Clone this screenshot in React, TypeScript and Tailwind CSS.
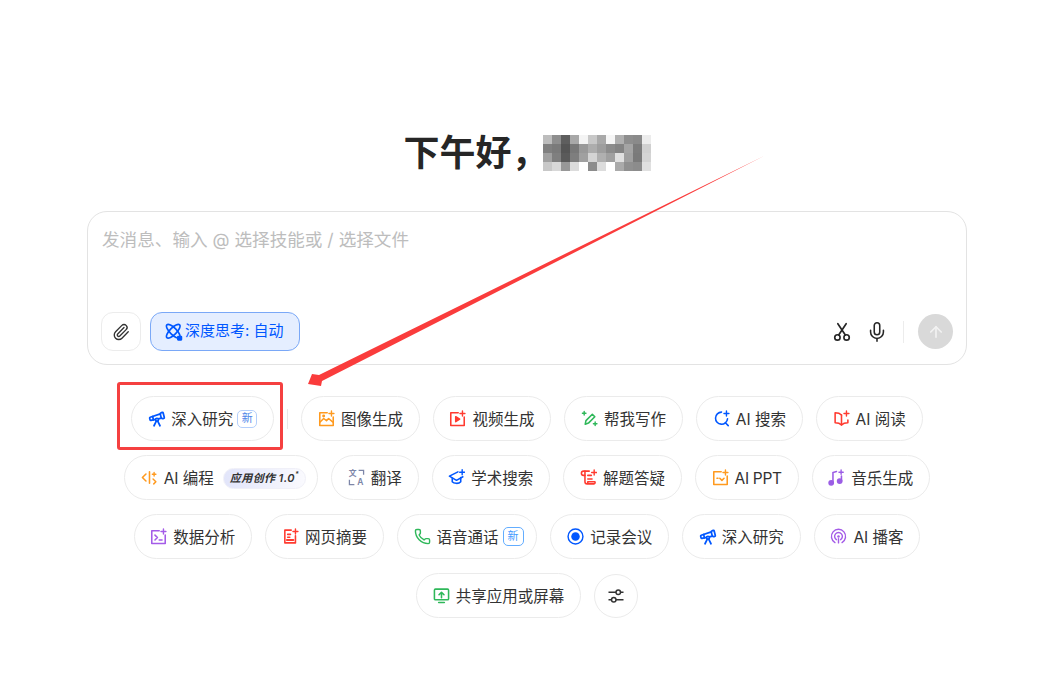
import type { ReactNode } from 'react'
import { ArrowUp, Mic, Paperclip, Phone, Telescope } from 'lucide-react'

const BLOCKS = [
  'bg-[#bdbdbd]', 'bg-[#8e8e8e]', 'bg-[#5e5e5e]', 'bg-[#a8a8a8]', 'bg-[#f4f4f4]', 'bg-[#c8c8c8]', 'bg-[#a9a9a9]', 'bg-[#f6f6f6]', 'bg-[#b0b0b0]', 'bg-[#8e8e8e]', 'bg-[#8a8a8a]', 'bg-[#ececec]',
  'bg-[#808080]', 'bg-[#7a7a7a]', 'bg-[#555555]', 'bg-[#787878]', 'bg-[#999999]', 'bg-[#adadad]', 'bg-[#9e9e9e]', 'bg-[#8c8c8c]', 'bg-[#848484]', 'bg-[#a4a4a4]', 'bg-[#7c7c7c]', 'bg-[#d0d0d0]',
  'bg-[#a0a0a0]', 'bg-[#7f7f7f]', 'bg-[#5a5a5a]', 'bg-[#7e7e7e]', 'bg-[#a0a0a0]', 'bg-[#d4d4d4]', 'bg-[#b0b0b0]', 'bg-[#a0a0a0]', 'bg-[#e0e0e0]', 'bg-[#a0a0a0]', 'bg-[#7a7a7a]', 'bg-[#d4d4d4]',
  'bg-[#c8c8c8]', 'bg-[#d8d8d8]', 'bg-[#989898]', 'bg-[#dcdcdc]', 'bg-[#ffffff]', 'bg-[#8c8c8c]', 'bg-[#dcdcdc]', 'bg-[#ffffff]', 'bg-[#aaaaaa]', 'bg-[#909090]', 'bg-[#8c8c8c]', 'bg-[#e0e0e0]',
]

function Ico({ className, children }: { className: string; children: ReactNode }) {
  return (
    <svg viewBox="0 0 24 24" fill="none" stroke="currentColor" strokeWidth="2.2" strokeLinecap="round" strokeLinejoin="round"
      className={`h-[17px] w-[17px] shrink-0 ${className}`}>
      {children}
    </svg>
  )
}

// the little plus in the corner of most icons
const Spark = ({ x = 19, y = 5 }: { x?: number; y?: number }) => (
  <path d={`M${x} ${y - 3.5}v7M${x - 3.5} ${y}h7`} strokeWidth="2" />
)

const icons = {
  telescope: <Telescope className="h-[18px] w-[18px] shrink-0 text-[#0057ff]" strokeWidth={2.3} />,
  image: (
    <Ico className="text-[#ff9a1f]">
      <path d="M13 4H2.500v18h19V10" />
      <path d="M3 17l5-5 4 3 3-3 6 5" />
      <circle cx="8" cy="8.500" r="1" />
      <Spark />
    </Ico>
  ),
  video: (
    <Ico className="text-[#ff3b30]">
      <path d="M13 4H2.500v18h19V10" />
      <path d="M9.500 9.500v7l5.500-3.500z" fill="currentColor" />
      <Spark />
    </Ico>
  ),
  write: (
    <Ico className="text-[#2fb85a]">
      <path d="M6 20l1-5L16 6l3.500 3.500L10.500 18.500z" />
      <path d="M4.500 2v5M2 4.500h5M20 17v5M17.500 19.500h5" strokeWidth="2" />
    </Ico>
  ),
  search: (
    <Ico className="text-[#0057ff]">
      <path d="M12 3a8.500 8.500 0 1 0 8.500 9.500" />
      <path d="M17.500 18l4 4" />
      <Spark />
    </Ico>
  ),
  read: (
    <Ico className="text-[#ff3b30]">
      <path d="M12 7c-2-2-5-3-9-3v14c4 0 7 1 9 3 2-2 5-3 9-3v-4" />
      <path d="M12 7v14" />
      <Spark />
    </Ico>
  ),
  code: (
    <Ico className="text-[#ff9a1f]">
      <path d="M7 7l-5 5 5 5M12 4v16" />
      <path d="M18.500 5v5M16 7.500h5M17 14l4 4-3 3" strokeWidth="2" />
    </Ico>
  ),
  translate: (
    <svg viewBox="0 0 24 24" className="h-[17px] w-[17px] shrink-0 text-[#7d86a8]" fill="none" stroke="currentColor" strokeWidth="1.800">
      <text x="1" y="10.500" fontSize="11" fill="currentColor" stroke="none" fontWeight="600">文</text>
      <text x="13" y="22.500" fontSize="12" fill="currentColor" stroke="none" fontWeight="600">A</text>
      <path d="M15 2h7v6M2 15v7h7" />
    </svg>
  ),
  cap: (
    <Ico className="text-[#0057ff]">
      <path d="M14 4L2 10l10 6 9-5" />
      <path d="M6 13v5c2 2.500 9 3.500 12 0v-6" />
      <Spark x={20} y={4.500} />
    </Ico>
  ),
  scroll: (
    <Ico className="text-[#ff3b30]">
      <path d="M13 3H5a3 3 0 0 0-3 3c0 2 1 3 3 3h2v9a3 3 0 0 0 3 3h10a2 2 0 0 0 1-3H11v2" />
      <path d="M7 9V3M11 9h5M11 14h6" />
      <Spark x={20} y={5} />
    </Ico>
  ),
  ppt: (
    <Ico className="text-[#ff9a1f]">
      <path d="M13 4H2.500v18h19V10" />
      <path d="M7 13h1.500M11 13l3 3 3-3" />
      <Spark />
    </Ico>
  ),
  music: (
    <svg viewBox="0 0 24 24" className="h-[17px] w-[17px] shrink-0 text-[#9b5de5]" fill="none" stroke="currentColor" strokeWidth="2.200" strokeLinecap="round">
      <path d="M7 19V5l5-1.500" />
      <circle cx="4.500" cy="19.500" r="3" fill="currentColor" />
      <path d="M19 17V10" />
      <circle cx="16.500" cy="17" r="3" fill="currentColor" />
      <path d="M18.500 1.500v6M15.500 4.500h6" strokeWidth="2" />
    </svg>
  ),
  data: (
    <Ico className="text-[#a45be8]">
      <path d="M13 4H2.500v18h19V10" />
      <path d="M7 10l3.500 3.500L7 17M13 17h4" />
      <Spark />
    </Ico>
  ),
  page: (
    <Ico className="text-[#ff3b30]">
      <path d="M13 3H4v18h15V11" />
      <path d="M8 9h4M8 13h3" />
      <path d="M7 17h9" strokeWidth="3" />
      <Spark x={19} y={5} />
    </Ico>
  ),
  phone: <Phone className="h-[17px] w-[17px] shrink-0 text-[#2fb85a]" strokeWidth={2} />,
  record: (
    <svg viewBox="0 0 24 24" className="h-[17px] w-[17px] shrink-0 text-[#0057ff]" fill="none" stroke="currentColor" strokeWidth="2">
      <circle cx="12" cy="12" r="10.500" />
      <circle cx="12" cy="12" r="6" fill="currentColor" stroke="none" />
    </svg>
  ),
  podcast: (
    <svg viewBox="0 0 24 24" className="h-[17px] w-[17px] shrink-0 text-[#a45be8]" fill="none" stroke="currentColor" strokeWidth="2" strokeLinecap="round">
      <path d="M7 20.500a10 10 0 1 1 10 0" />
      <path d="M9 16.500a5.500 5.500 0 1 1 6 0" />
      <circle cx="12" cy="12" r="1.800" fill="currentColor" stroke="none" />
      <path d="M12 15v6" />
    </svg>
  ),
  share: (
    <svg viewBox="0 0 24 24" className="h-[17px] w-[17px] shrink-0 text-[#2fb85a]" fill="none" stroke="currentColor" strokeWidth="2.200" strokeLinecap="round" strokeLinejoin="round">
      <rect x="2" y="3" width="20" height="15" rx="1.500" />
      <path d="M8 22h8" />
      <path d="M12 15V8M8.500 11l3.500-3.500 3.500 3.500" />
    </svg>
  ),
}

const NewTag = ({ strong }: { strong?: boolean }) => (
  <span className={`-mt-[3px] -ml-[2px] flex items-center justify-center rounded-[5px] border text-[11px] leading-none tracking-normal ${
    strong ? '-mr-[3px] h-[19px] w-[21px] border-[#63adff] text-[#3f9bff]' : 'h-[18px] w-[20px] border-[#b4cffb] text-[#4d86e8]'
  }`}>
    新
  </span>
)

function Chip({ icon, children }: { icon: ReactNode; children: ReactNode }) {
  return (
    <div className="flex h-[45px] items-center gap-[6px] rounded-full border border-[#ebebeb] bg-white px-[15.8px] pt-[3px] text-[15.5px] text-[#333333] [&>svg]:-mt-[3px]">
      {icon}
      {children}
    </div>
  )
}

export default function App() {
  return (
    <div className="relative h-[684px] w-[1046px] overflow-hidden bg-white font-['Inter','Noto_Sans_CJK_SC',sans-serif]">
      <div className="ml-[87px] flex w-[880px] flex-col pt-[130px]">
        <div className="flex h-[46px] items-center justify-center">
          <h1 className="text-[36px] leading-[46px] font-bold text-[#262626]">下午好，</h1>
          <div className="ml-[-5px] grid grid-cols-[repeat(12,9px)] grid-rows-[repeat(4,9px)]">
            {BLOCKS.map((c, i) => <div key={i} className={c} />)}
          </div>
        </div>

        <div className="mt-[35px] flex h-[154px] flex-col justify-between rounded-[20px] border border-[#e3e3e3] bg-white px-[13px] pt-[14px] pb-[13px]">
          <div className="px-[1px] text-[17.6px] leading-[28px] text-[#bdbdbd]">发消息、输入 @ 选择技能或 / 选择文件</div>
          <div className="flex items-center">
            <button className="flex h-[39px] w-[40px] items-center justify-center rounded-[12px] border border-[#ececec]">
              <Paperclip className="h-[18px] w-[18px] text-[#333333]" strokeWidth={1.8} />
            </button>
            <button className="ml-[9px] flex h-[39px] w-[150px] items-center gap-[2px] rounded-[12px] border border-[#7aa8f7] bg-[#e5eeff] pl-[14px] text-[15px] text-[#0057ff]">
              <svg viewBox="0 0 24 24" className="h-[18px] w-[18px] shrink-0" fill="none" stroke="currentColor" strokeWidth="2.200">
                <ellipse cx="11" cy="11" rx="4.500" ry="12" transform="rotate(45 11 11)" />
                <ellipse cx="11" cy="11" rx="4.500" ry="12" transform="rotate(-45 11 11)" />
                <rect x="16" y="17" width="7" height="6.500" rx="1.500" fill="currentColor" stroke="none" />
              </svg>
              深度思考: 自动
            </button>
            <div className="ml-auto flex items-center">
              <svg viewBox="0 0 24 24" className="h-[20px] w-[20px] text-[#262626]" fill="none" stroke="currentColor" strokeWidth="2" strokeLinecap="round">
                <circle cx="6.500" cy="18.500" r="3.200" />
                <circle cx="17.500" cy="18.500" r="3.200" />
                <path d="M8 15.500L17 2M16 15.500L7 2" />
              </svg>
              <Mic className="ml-[14px] h-[22px] w-[22px] text-[#262626]" strokeWidth={1.7} />
              <div className="mr-[14px] ml-[15px] h-[22px] w-px bg-[#ececec]" />
              <button className="flex h-[35px] w-[35px] items-center justify-center rounded-full bg-[#d9d9d9]">
                <ArrowUp className="h-[18px] w-[18px] text-[#f2f2f2]" strokeWidth={2.2} />
              </button>
            </div>
          </div>
        </div>

        <div className="mt-[31px] flex flex-col gap-[14px]">
          <div className="flex items-center justify-center gap-[13px]">
            <Chip icon={icons.telescope}><span className="-ml-px">深入研究</span><NewTag /></Chip>
            <div className="h-[20px] w-px bg-[#e8e8e8]" />
            <Chip icon={icons.image}>图像生成</Chip>
            <Chip icon={icons.video}>视频生成</Chip>
            <Chip icon={icons.write}>帮我写作</Chip>
            <Chip icon={icons.search}>AI 搜索</Chip>
            <Chip icon={icons.read}>AI 阅读</Chip>
          </div>
          <div className="flex items-center justify-center gap-[13px]">
            <Chip icon={icons.code}>
              AI 编程
              <span className="-mt-px -mr-[5px] ml-[3px] flex h-[21px] items-center rounded-full border border-[#f0f0f8] bg-gradient-to-r from-[#e2e5fa] to-[#fafafe] px-[6px] text-[11px] font-semibold tracking-[0.4px] text-[#333333] italic">
                应用创作 1.0<sup className="text-[7px]">*</sup>
              </span>
            </Chip>
            <Chip icon={icons.translate}>翻译</Chip>
            <Chip icon={icons.cap}>学术搜索</Chip>
            <Chip icon={icons.scroll}>解题答疑</Chip>
            <Chip icon={icons.ppt}><span className="tracking-[-0.3px]">AI PPT</span></Chip>
            <Chip icon={icons.music}>音乐生成</Chip>
          </div>
          <div className="flex items-center justify-center gap-[13px]">
            <Chip icon={icons.data}>数据分析</Chip>
            <Chip icon={icons.page}>网页摘要</Chip>
            <Chip icon={icons.phone}>语音通话<NewTag strong /></Chip>
            <Chip icon={icons.record}>记录会议</Chip>
            <Chip icon={icons.telescope}><span className="-ml-px">深入研究</span></Chip>
            <Chip icon={icons.podcast}>AI 播客</Chip>
          </div>
          <div className="flex items-center justify-center gap-[13px]">
            <Chip icon={icons.share}>共享应用或屏幕</Chip>
            <button className="flex h-[44px] w-[44px] items-center justify-center rounded-full border border-[#ebebeb]">
              <svg viewBox="0 0 24 24" className="h-[18px] w-[18px] text-[#333333]" fill="none" stroke="currentColor" strokeWidth="2">
                <path d="M2 7h10M18 7h4M2 17h4M12 17h10" />
                <circle cx="15" cy="7" r="3" />
                <circle cx="9" cy="17" r="3" />
              </svg>
            </button>
          </div>
        </div>
      </div>

      {/* annotations drawn over the screenshot */}
      <div className="absolute top-[382px] left-[117px] h-[68px] w-[166px] rounded-[3px] border-[3px] border-[#f54040]" />
      <svg className="pointer-events-none absolute inset-0 h-full w-full" viewBox="0 0 1046 684">
        <polygon points="772,152 322,381 321,386 308,384 312,374 319,375" fill="#fa3c3c" />
      </svg>
    </div>
  )
}
